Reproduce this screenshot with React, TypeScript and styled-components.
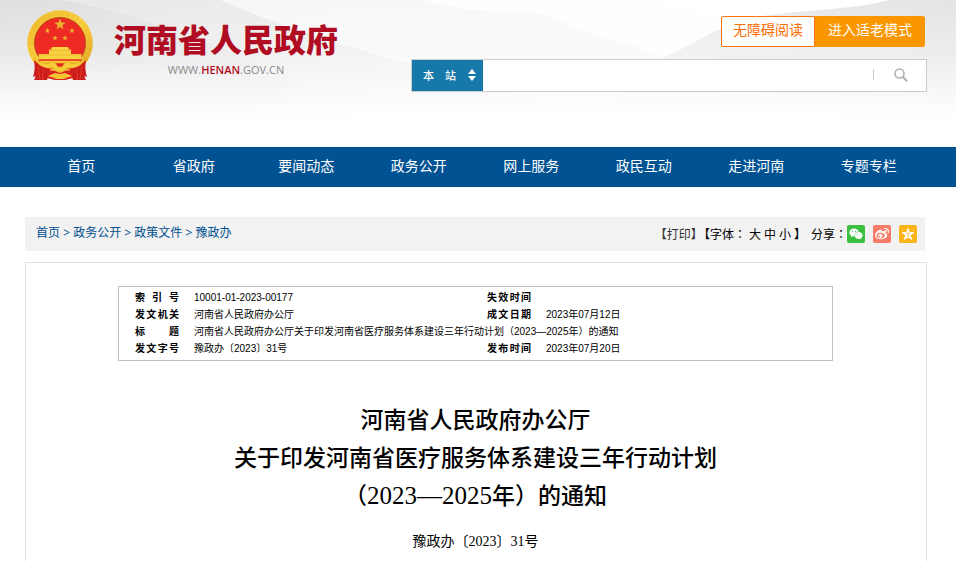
import React from "react";
import styled, { createGlobalStyle } from "styled-components";
import { FaWeibo, FaWeixin } from "react-icons/fa";

const GlobalStyle = createGlobalStyle`
  * { box-sizing: border-box; }
  body {
    margin: 0;
    background: #fff;
    color: #000;
    font: 12px/20px "Liberation Sans", "Noto Sans CJK SC", sans-serif;
  }
  a { color: inherit; text-decoration: none; }
  button, input, select { font: inherit; margin: 0; }
`;

const Page = styled.div`
  min-height: 100vh;
  display: flex;
  flex-direction: column;
`;

const Header = styled.header`
  position: relative;
  isolation: isolate;
  min-height: 147px;
  padding: 0 29px 0 27px;
  display: flex;
  align-items: flex-start;
  justify-content: space-between;
`;

const Waves = styled.svg`
  position: absolute;
  inset: 0;
  z-index: -1;
  width: 100%;
  height: 100%;
`;

const Brand = styled.a`
  display: flex;
  gap: 21px;
  padding-top: 10px;
`;

const BrandText = styled.div`
  display: flex;
  flex-direction: column;
  align-items: center;
`;

const SiteName = styled.span`
  color: #b00d23;
  font: 900 32px/56px "Noto Sans CJK SC", sans-serif;
`;

const SiteUrl = styled.span`
  color: #8b8b8b;
  font: 11px/8px "Open Sans", sans-serif;
  strong { color: #b00d23; font-weight: 600; }
`;

const HeaderTools = styled.div`
  width: 516px;
  padding-top: 16px;
  display: flex;
  flex-direction: column;
  gap: 12px;
`;

const ModeButtons = styled.div`
  display: flex;
  justify-content: flex-end;
  padding-right: 2px;
`;

const ModeButton = styled.button<{ $filled?: boolean }>`
  height: 31px;
  padding: 0 ${(p) => (p.$filled ? 12 : 11)}px 4px;
  border: 1px solid ${(p) => (p.$filled ? "#fa9600" : "#ff7412")};
  border-radius: ${(p) => (p.$filled ? "0 2px 2px 0" : "2px 0 0 2px")};
  background: ${(p) => (p.$filled ? "#fa9600" : "#fff")};
  color: ${(p) => (p.$filled ? "#fff" : "#ff6c00")};
  font: 14px/25px "Noto Sans CJK SC", sans-serif;
`;

const SearchForm = styled.form`
  display: flex;
  height: 33px;
  border: 1px solid #ccc;
  background: #fff;
`;

const Scope = styled.label`
  position: relative;
  flex: 0 0 71px;
  background: #1778aa;
  color: #fff;
  select {
    width: 100%;
    height: 100%;
    padding: 0 0 2px 11px;
    border: 0;
    appearance: none;
    background: transparent;
    color: #fff;
    font: 500 11px "Noto Sans CJK SC", sans-serif;
  }
  svg {
    position: absolute;
    right: 7px;
    top: 9px;
    pointer-events: none;
  }
`;

const SearchInput = styled.input`
  flex: 1;
  min-width: 0;
  border: 0;
  padding: 0 8px;
  background: transparent;
`;

const SearchButton = styled.button`
  width: 53px;
  height: 11px;
  margin-top: 9px;
  padding: 0 0 0 2px;
  border: 0;
  border-left: 1px solid #ccc;
  background: transparent;
  display: flex;
  align-items: center;
  justify-content: center;
  svg { flex: none; }
`;

const Nav = styled.nav`
  background: #005293;
  padding: 0 31px 0 25px;
  display: grid;
  grid-template-columns: repeat(8, 1fr);
  a {
    color: #fff;
    text-align: center;
    font: 14px/36px "Noto Sans CJK SC", sans-serif;
    padding-bottom: 4px;
  }
`;

const Main = styled.main`
  flex: 1;
  display: flex;
  flex-direction: column;
  padding: 30px 29px 0 25px;
`;

const CrumbBar = styled.div`
  display: flex;
  align-items: center;
  justify-content: space-between;
  height: 34px;
  margin-right: 2px;
  padding: 0 8px 0 11px;
  background: #f2f2f2;
`;

const Crumbs = styled.nav`
  color: #00508f;
  font: 12px/30px "Open Sans", "Noto Sans CJK SC", sans-serif;
  padding-bottom: 2px;
`;

const Tools = styled.div`
  display: flex;
  align-items: center;
  font: 12px/18px "Noto Sans CJK SC", sans-serif;
`;

const TextButton = styled.button`
  padding: 0;
  border: 0;
  background: transparent;
  color: #000;
`;

const PrintButton = styled(TextButton)`
  margin-right: 1px;
  padding-bottom: 1px;
  color: #333;
`;

const NarrowBracket = styled.span`
  font-feature-settings: "halt";
`;

const FontSizes = styled.span`
  display: flex;
  gap: 3px;
  margin-right: 5px;
  padding-bottom: 1px;
`;

const Colon = styled.span`
  font-family: "Noto Sans CJK TC", sans-serif;
`;

const ShareList = styled.span`
  display: flex;
  gap: 8px;
`;

const ShareButton = styled.button<{ $color: string }>`
  width: 18px;
  height: 18px;
  padding: 0;
  border: 0;
  border-radius: 2px;
  background: ${(p) => p.$color};
  color: #fff;
  display: flex;
  align-items: center;
  justify-content: center;
`;

const Article = styled.article`
  flex: 1;
  margin-top: 11px;
  padding: 23px 93px 0 92px;
  border: 1px solid #ddd;
  border-bottom: 0;
`;

const MetaBox = styled.div`
  border: 1px solid #bfbfbf;
  padding: 2px 16px 3px;
`;

const MetaTable = styled.table`
  width: 100%;
  table-layout: fixed;
  border-collapse: collapse;
  font-size: 10px;
  line-height: 17px;
  th, td { padding: 0; text-align: left; height: 17px; }
  th { font-weight: 700; text-align-last: justify; }
  td { padding-left: 15px; white-space: nowrap; }
`;

const LabelCol = styled.col`
  width: 44px;
`;

const DateCol = styled.col`
  width: 285px;
`;

const Title = styled.h1`
  margin: 41px 0 16px;
  text-align: center;
  font: 500 23px/38px "Liberation Serif", "Noto Sans CJK SC", serif;
`;

const Years = styled.span`
  font-size: 25px;
  line-height: 1;
`;

const DocNumber = styled.p`
  margin: 0;
  text-align: center;
  font: 14px/20px "Liberation Serif", "Noto Sans CJK SC", serif;
`;

const starPoints = (cx: number, cy: number, r: number) =>
  Array.from({ length: 10 }, (_, i) => {
    const radius = i % 2 ? r * 0.4 : r;
    const a = -Math.PI / 2 + (i * Math.PI) / 5;
    return `${(cx + radius * Math.cos(a)).toFixed(2)},${(cy + radius * Math.sin(a)).toFixed(2)}`;
  }).join(" ");

const stars: [number, number, number][] = [
  [33, 14.5, 6],
  [20.5, 20.7, 3],
  [45, 20.7, 3],
  [28, 28, 3],
  [38, 28, 3],
];

const Emblem = () => (
  <svg width="66" height="71" viewBox="0 0 66 71" aria-hidden="true">
    <defs>
      <linearGradient id="gold" x1="0" y1="0" x2="1" y2="1">
        <stop offset="0" stopColor="#f0b92c" />
        <stop offset=".5" stopColor="#f9d140" />
        <stop offset="1" stopColor="#dfa022" />
      </linearGradient>
    </defs>
    <circle cx="33" cy="33" r="32.8" fill="url(#gold)" />
    <circle cx="33" cy="33" r="29.3" fill="none" stroke="#d99a20" strokeWidth="4" strokeDasharray="2 3" opacity=".15" />
    <circle cx="33" cy="33" r="25.6" fill="#ee2a24" stroke="#ad4a14" strokeWidth=".8" />
    {stars.map(([x, y, r]) => (
      <polygon key={`${x}-${y}`} points={starPoints(x, y, r)} fill="#ecb62c" />
    ))}
    <path d="M25 37h16l1 2.500h2v4.500h10.500v5.500h-43v-5.500H22v-4.500h2z" fill="#f8d13e" />
    <path d="M23 40.500h20M12 45h42" stroke="#e4ab2c" strokeWidth=".5" />
    <path d="M11 49.500h44l-6 9H17z" fill="#e5251f" />
    <path d="M12 50.800h42l-2 2.400H14z" fill="#f6c834" />
    <path d="M7 50c4 4 10 7 17 7l-4 13H7l2-4-3 1c2-6 2-11 1-17z" fill="#cb1d1b" />
    <path d="M59 50c-4 4-10 7-17 7l4 13h13l-2-4 3 1c-2-6-2-11-1-17z" fill="#cb1d1b" />
    <path d="M11 56l2 13M16 59l0 11M55 56l-2 13M50 59l0 11" stroke="#e8352a" strokeWidth="1.200" />
    <path d="M20 60l8 1 5 2 5-2 8-1v8l-8 2H28l-8-2z" fill="#d8211c" />
    <path d="M21 66l7-3 5 1 5-1 7 3-6 2-2 1H29l-2-1z" fill="#f5c433" />
    <path d="M7 48c5 5 10 6 16 5 3-1 5-1 6 1 1 2 2 3 4 3s3-1 4-3c1-2 3-2 6-1 6 1 11 0 16-5-4 8-11 11-18 10-2 0-3 4-8 4s-6-4-8-4C18 59 11 56 7 48z" fill="#f6ca38" stroke="#d9991f" strokeWidth=".4" />
  </svg>
);

const HeaderWaves = () => (
  <Waves viewBox="0 0 956 147" preserveAspectRatio="none" aria-hidden="true">
    <defs>
      <linearGradient id="fade" x1="0" y1="0" x2="0" y2="1">
        <stop offset="0" stopColor="#fff" stopOpacity="0" />
        <stop offset=".35" stopColor="#fff" stopOpacity=".3" />
        <stop offset=".8" stopColor="#fff" />
      </linearGradient>
      <linearGradient id="rightFade" gradientUnits="userSpaceOnUse" x1="956" y1="0" x2="700" y2="110">
        <stop offset="0" stopColor="#e4e4e4" />
        <stop offset="1" stopColor="#ececec" />
      </linearGradient>
      <linearGradient id="leftFade" gradientUnits="userSpaceOnUse" x1="0" y1="0" x2="420" y2="0">
        <stop offset="0" stopColor="#dfdfdf" />
        <stop offset="1" stopColor="#e9e9e9" />
      </linearGradient>
    </defs>
    <rect width="956" height="147" fill="url(#leftFade)" />
    <path d="M60 0C140 14 230 45 350 110L400 147H956V0z" fill="#fff" opacity=".25" />
    <path d="M220 0C270 22 320 38 400 62C460 74 520 88 600 130L620 147H956V0z" fill="#fff" opacity=".6" />
    <path d="M400 111C450 105 480 96 530 91L670 60L956 100V147H400z" fill="#f0f0f0" opacity=".6" />
    <path d="M425 0C470 14 500 11 530 12C565 18 575 32 610 40C640 46 650 52 665 59L820 70L956 0z" fill="#fff" opacity=".8" />
    <path d="M650 0C680 8 700 15 770 18C810 9 850 10 890 0z" fill="#fff" />
    <path d="M660 59C700 42 725 20 770 15C815 9 850 10 890 0H956V147H560C600 120 630 80 660 59z" fill="url(#rightFade)" />
    <rect width="956" height="147" fill="url(#fade)" />
  </Waves>
);

const NAV = ["首页", "省政府", "要闻动态", "政务公开", "网上服务", "政民互动", "走进河南", "专题专栏"];
const CRUMBS = ["首页", "政务公开", "政策文件", "豫政办"];

export default function App() {
  return (
    <Page>
      <GlobalStyle />
      <Header>
        <HeaderWaves />
        <Brand href="#">
          <Emblem />
          <BrandText>
            <SiteName>河南省人民政府</SiteName>
            <SiteUrl>WWW.<strong>HENAN</strong>.GOV.CN</SiteUrl>
          </BrandText>
        </Brand>
        <HeaderTools>
          <ModeButtons>
            <ModeButton type="button">无障碍阅读</ModeButton>
            <ModeButton type="button" $filled>进入适老模式</ModeButton>
          </ModeButtons>
          <SearchForm role="search" onSubmit={(e) => e.preventDefault()}>
            <Scope>
              <select aria-label="搜索范围">
                <option>本　站</option>
              </select>
              <svg width="8" height="12" viewBox="0 0 8 12" fill="#fff" aria-hidden="true">
                <path d="M4 0l4 5H0zM4 12l4-5H0z" />
              </svg>
            </Scope>
            <SearchInput type="search" aria-label="搜索" />
            <SearchButton type="submit" aria-label="搜索">
              <svg width="14" height="14" viewBox="0 0 14 14" fill="none" stroke="#b0b0b0" aria-hidden="true">
                <circle cx="5.500" cy="5.500" r="4.500" strokeWidth="1.600" />
                <path d="M8.700 8.700l4.300 4.500" strokeWidth="2" />
              </svg>
            </SearchButton>
          </SearchForm>
        </HeaderTools>
      </Header>

      <Nav>
        {NAV.map((item) => (
          <a href="#" key={item}>{item}</a>
        ))}
      </Nav>

      <Main>
        <CrumbBar>
          <Crumbs>
            {CRUMBS.map((c, i) => (
              <React.Fragment key={c}>
                {i > 0 && " > "}
                <a href="#">{c}</a>
              </React.Fragment>
            ))}
          </Crumbs>
          <Tools>
            <PrintButton type="button">【打印<NarrowBracket>】</NarrowBracket></PrintButton>
            <FontSizes>
              <span>【字体<Colon>：</Colon></span>
              <TextButton type="button">大</TextButton>
              <TextButton type="button">中</TextButton>
              <TextButton type="button">小</TextButton>
              <span>】</span>
            </FontSizes>
            <span>分享<Colon>：</Colon></span>
            <ShareList>
              <ShareButton type="button" $color="#3bbf3f" aria-label="微信"><FaWeixin size={14} /></ShareButton>
              <ShareButton type="button" $color="#f87b68" aria-label="微博"><FaWeibo size={14} /></ShareButton>
              <ShareButton type="button" $color="#fbb51b" aria-label="QQ空间">
                <svg width="14" height="14" viewBox="0 0 14 14" aria-hidden="true">
                  <polygon points={starPoints(7, 7.5, 6)} fill="#fff" stroke="#fff" strokeLinejoin="round" />
                  <path d="M5 6.200h4L6 9h3.500" fill="none" stroke="#fbb51b" strokeWidth=".7" />
                </svg>
              </ShareButton>
            </ShareList>
          </Tools>
        </CrumbBar>

        <Article>
          <MetaBox>
            <MetaTable>
              <colgroup>
                <LabelCol />
                <col />
                <LabelCol />
                <DateCol />
              </colgroup>
              <tbody>
                <tr>
                  <th scope="row">索引号</th>
                  <td>10001-01-2023-00177</td>
                  <th scope="row">失效时间</th>
                  <td />
                </tr>
                <tr>
                  <th scope="row">发文机关</th>
                  <td>河南省人民政府办公厅</td>
                  <th scope="row">成文日期</th>
                  <td>2023年07月12日</td>
                </tr>
                <tr>
                  <th scope="row">标题</th>
                  <td colSpan={3}>河南省人民政府办公厅关于印发河南省医疗服务体系建设三年行动计划（2023—2025年）的通知</td>
                </tr>
                <tr>
                  <th scope="row">发文字号</th>
                  <td>豫政办〔2023〕31号</td>
                  <th scope="row">发布时间</th>
                  <td>2023年07月20日</td>
                </tr>
              </tbody>
            </MetaTable>
          </MetaBox>
          <Title>
            河南省人民政府办公厅<br />
            关于印发河南省医疗服务体系建设三年行动计划<br />
            （<Years>2023—2025</Years>年）的通知
          </Title>
          <DocNumber>豫政办〔2023〕31号</DocNumber>
        </Article>
      </Main>
    </Page>
  );
}
